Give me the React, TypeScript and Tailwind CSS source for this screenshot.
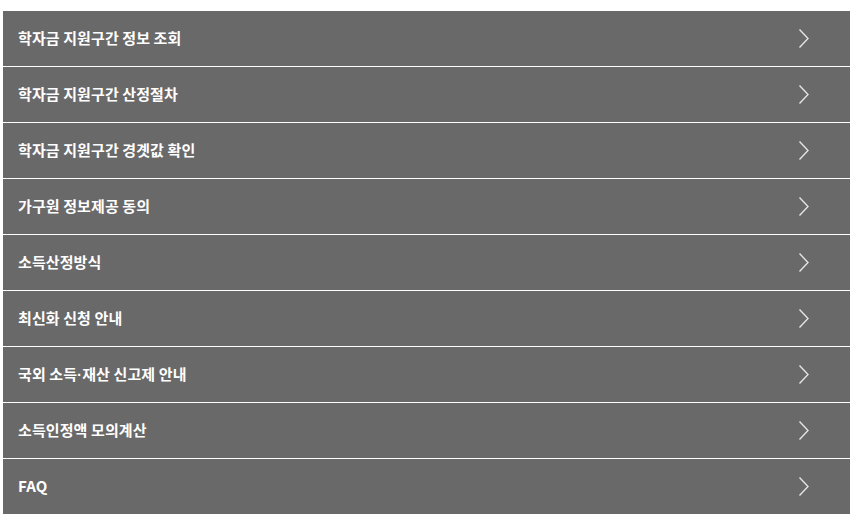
import React from 'react';

const items: React.ReactNode[] = [
  '학자금 지원구간 정보 조회',
  '학자금 지원구간 산정절차',
  '학자금 지원구간 경곗값 확인',
  '가구원 정보제공 동의',
  '소득산정방식',
  '최신화 신청 안내',
  <>
    국외 소득<span style={{ fontFamily: '"Liberation Sans", sans-serif' }}>·</span>재산 신고제 안내
  </>,
  '소득인정액 모의계산',
  'FAQ',
];

function Chevron() {
  return (
    <svg width="12" height="21" viewBox="0 0 12 21" fill="none" className="shrink-0">
      <path d="M1.5 1.5 L10 10.5 L1.5 19.5" stroke="#e4e4e4" strokeWidth="1.4" />
    </svg>
  );
}

export default function App() {
  return (
    <div className="w-[856px] h-[520px] bg-white pt-[11px] pl-[3px] pr-[6px]">
      <ul className="bg-[#696969]">
        {items.map((label, i) => (
          <li
            key={i}
            className={
              i < items.length - 1
                ? 'flex h-[56px] items-center justify-between border-b border-white pl-[15px] pr-[40px]'
                : 'flex h-[55px] items-center justify-between pl-[15px] pr-[40px]'
            }
          >
            <span
              className="text-[15px] font-bold text-white tracking-[0.1px]"
              style={{ fontFamily: '"Noto Sans CJK KR", "Noto Sans", sans-serif' }}
            >
              {label}
            </span>
            <Chevron />
          </li>
        ))}
      </ul>
    </div>
  );
}
